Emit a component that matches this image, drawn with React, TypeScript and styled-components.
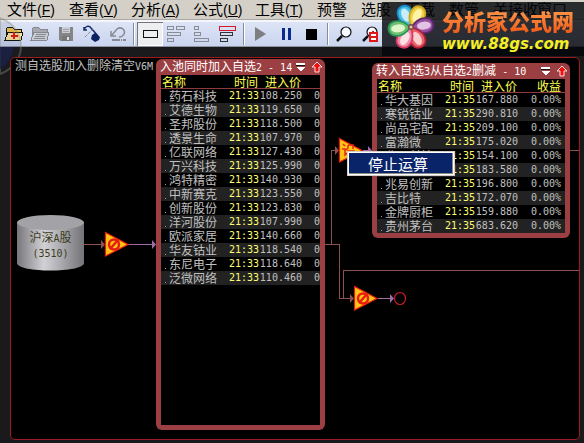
import React from "react";
import styled, { createGlobalStyle } from "styled-components";

const cjk = '"Noto Sans CJK SC", sans-serif';
const mono = '"DejaVu Sans Mono", "Noto Sans CJK SC", monospace';

const GlobalStyle = createGlobalStyle`
  * { box-sizing: border-box; }
  body { margin: 0; background: #1a1a1c; font-family: ${cjk}; overflow: hidden; }
  button { font-family: inherit; padding: 0; border: 0; background: none; }
`;

const Shell = styled.div`
  min-height: 100vh;
  display: flex;
  flex-direction: column;
  position: relative;
`;

const MenuBar = styled.nav`
  height: 20px;
  display: flex;
  align-items: flex-start;
  gap: 14px;
  padding-left: 7px;
  background: #d4d0c8;
  border-bottom: 1px solid #a9a8a6;
`;

const MenuItem = styled.button<{ $wide?: boolean }>`
  flex: none;
  width: ${(p) => (p.$wide ? 48 : 30)}px;
  white-space: nowrap;
  text-align: left;
  font-size: 15px;
  line-height: 17px;
  color: #000;
`;

const Accel = styled.span`
  font-family: "Liberation Sans", sans-serif;
  font-size: 14px;
`;

const ToolBar = styled.div`
  height: 27px;
  display: flex;
  align-items: center;
  padding-left: 1px;
  border-top: 2px solid #f4f6fb;
  border-bottom: 1px solid #8e949f;
  background: linear-gradient(#dde4f6, #c9d4ee);
`;

const Tool = styled.button<{ $pressed?: boolean }>`
  width: 26px;
  height: 24px;
  display: grid;
  place-items: center;
  background: ${(p) => (p.$pressed ? "#eceef0" : "transparent")};
  box-shadow: ${(p) => (p.$pressed ? "inset 1px 1px #777, inset -1px -1px #fff" : "none")};
`;

const Divider = styled.span`
  width: 2px;
  height: 22px;
  margin: 0 2px;
  background: #858b97;
  border-right: 1px solid #fff;
`;

const Watermark = styled.aside`
  position: absolute;
  top: 2px;
  right: 0;
  width: 202px;
  height: 54px;
  padding-left: 4px;
  display: flex;
  gap: 4px;
  background: rgba(5, 6, 10, 0.82);
`;

const Brand = styled.div`
  display: flex;
  flex-direction: column;
  padding-top: 4px;
  white-space: nowrap;
`;

const BrandName = styled.span`
  font-size: 22px;
  line-height: 28px;
  font-weight: 900;
  color: transparent;
  background: linear-gradient(#ffa052, #f05a16);
  background-clip: text;
`;

const BrandLink = styled.a`
  font: italic bold 15px/20px "DejaVu Sans", sans-serif;
  color: #f5ef25;
  text-decoration: none;
`;

const Lens = styled.svg`
  position: absolute;
  left: 0;
  top: 14px;
  pointer-events: none;
`;

const Canvas = styled.main`
  flex: 1;
  position: relative;
  min-height: 383px;
  margin: 10px 4px 3px 10px;
  background: #000;
  border: 1px solid #9c1c20;
  border-radius: 5px;
`;

const CanvasTitle = styled.h1`
  margin: 0;
  padding-left: 4px;
  font-size: 12px;
  line-height: 14px;
  font-weight: 400;
  color: #c0c0c0;
`;

const Latin = styled.span`
  font-family: ${mono};
  font-size: 10px;
  white-space: pre;
`;

const Wires = styled.svg`
  position: absolute;
  inset: 0;
  width: 100%;
  height: 100%;
  overflow: visible;
`;

const Source = styled.div`
  position: absolute;
  left: 6px;
  top: 157px;
  width: 67px;
  height: 56px;
  display: grid;
`;

const SourceShape = styled.svg`
  grid-area: 1 / 1;
`;

const SourceLabel = styled.div`
  grid-area: 1 / 1;
  z-index: 1;
  padding-top: 15px;
  text-align: center;
  font-size: 12px;
  line-height: 13px;
  color: #3c3c20;
`;

const Pool = styled.section<{ $x: number; $y: number; $w: number; $h: number }>`
  position: absolute;
  left: ${(p) => p.$x}px;
  top: ${(p) => p.$y}px;
  width: ${(p) => p.$w}px;
  min-height: ${(p) => p.$h}px;
  display: flex;
  flex-direction: column;
  padding: 0 5px 5px;
  border-radius: 6px;
  background: #9b3f42;
`;

const PoolHead = styled.header`
  display: flex;
  align-items: center;
  height: 16px;
  margin: 0 -5px 0 -1px;
  color: #fff;
`;

const PoolTitle = styled.h2`
  flex: 1;
  margin: 0;
  font-size: 12px;
  line-height: 16px;
  font-weight: 400;
  white-space: nowrap;
`;

const HeadButton = styled.button`
  width: 16px;
  height: 14px;
  display: grid;
  place-items: center;
`;

const PoolBody = styled.div`
  flex: 1;
  background: #000;
`;

const Table = styled.table`
  width: 100%;
  table-layout: fixed;
  border-collapse: collapse;
  font-size: 12px;
  line-height: 14px;
  color: #c0c0c0;
  white-space: nowrap;
`;

const HeadRow = styled.tr`
  height: 14px;
  color: #ffff50;
  box-shadow: inset 0 -1px #8c3a3c;
`;

const Row = styled.tr`
  height: 14px;
  &:nth-child(even) { background: #222; }
`;

const Th = styled.th<{ $w?: number }>`
  width: ${(p) => (p.$w ? `${p.$w}px` : "auto")};
  height: 14px;
  padding: 0 1px;
  font-weight: 400;
  line-height: 14px;
  text-align: right;
  &:first-child { text-align: left; }
  &:last-child { padding-right: 4px; }
`;

const NameCell = styled.td`
  height: 14px;
  padding: 0 0 0 8px;
  line-height: 14px;
  background: linear-gradient(#a0a0a0, #a0a0a0) 4px 11px / 1px 1px no-repeat;
`;

const NumCell = styled.td<{ $time?: boolean; $edge?: number }>`
  height: 14px;
  padding: 0 ${(p) => p.$edge ?? 0}px 0 0;
  text-align: right;
  font-family: ${mono};
  font-size: 10px;
  line-height: 14px;
  color: ${(p) => (p.$time ? "#ffff70" : "inherit")};
`;

const Popup = styled.div`
  position: absolute;
  left: 336px;
  top: 93px;
  width: 108px;
  padding: 2px;
  background: #0a246a;
  border: 1px solid #d4d0c8;
  box-shadow: inset 0 0 0 1px #fff, inset -1px -1px 0 1px #8a8a8a;
`;

const PopupItem = styled.button`
  display: block;
  width: 100%;
  padding-left: 18px;
  text-align: left;
  font-size: 15px;
  line-height: 19px;
  color: #fff;
`;

const menus: [string, string?][] = [
  ["文件", "F"], ["查看", "V"], ["分析", "A"], ["公式", "U"], ["工具", "T"],
  ["预警"], ["选股"], ["下载"], ["数管"], ["关接收"], ["窗口"],
];

type Stock = [string, string];

const entryStocks: Stock[] = [
  ["药石科技", "108.250"], ["艾德生物", "119.650"], ["圣邦股份", "118.500"],
  ["透景生命", "107.970"], ["亿联网络", "127.430"], ["万兴科技", "125.990"],
  ["鸿特精密", "140.930"], ["中新赛克", "123.550"], ["创新股份", "123.830"],
  ["洋河股份", "107.990"], ["欧派家居", "140.660"], ["华友钴业", "118.540"],
  ["东尼电子", "118.640"], ["泛微网络", "110.460"],
];

const movedStocks: Stock[] = [
  ["华大基因", "167.880"], ["寒锐钴业", "290.810"], ["尚品宅配", "209.100"],
  ["富瀚微", "175.020"], ["兆日科技", "154.100"], ["先导智能", "183.580"],
  ["兆易创新", "196.800"], ["吉比特", "172.070"], ["金牌厨柜", "159.880"],
  ["贵州茅台", "683.620"],
];

function Folder({ on }: { on?: boolean }) {
  const s = on ? "#15130a" : "#85888e";
  return (
    <svg width="20" height="18" viewBox="0 0 20 18" shapeRendering="crispEdges">
      <path d="M2 15V4L4 2H8L10 4H17V7" fill={on ? "#f3c84d" : "#a5a8ae"} stroke={s} />
      <path d="M1 15L4 7H19L17 15Z" fill={on ? "#ffe69b" : "#c8ccd2"} stroke={s} />
      {on ? (
        <path d="M10 7V14M6.5 10.5H13.500" stroke="#e02010" strokeWidth="2" />
      ) : (
        <path d="M6 9H16M5 11H15M4 13H15" stroke="#85888e" />
      )}
    </svg>
  );
}

function Save() {
  return (
    <svg width="16" height="16" viewBox="0 0 16 16" shapeRendering="crispEdges">
      <path d="M1 1H15V15H2L1 14Z" fill="#858585" />
      <path d="M4 1H12V7H4Z" fill="#c9ced8" />
      <path d="M5 3H11M5 5H11" stroke="#a0a4aa" />
      <path d="M4 10H12V15H4Z" fill="#777" />
      <path d="M9 11H11V14H9Z" fill="#e1e6ee" />
    </svg>
  );
}

function Probe() {
  return (
    <svg width="18" height="18" viewBox="0 0 18 18">
      <path d="M1 5C2 1 6 0 8 3L15 11M1 2V5H4" fill="none" stroke="#142a68" strokeWidth="1.500" />
      <path d="M9 10L12 8L17 12L16 15L12 17L8 14Z" fill="#0c2262" />
      <path d="M2 12L10 4" stroke="#54627f" strokeDasharray="1 1" />
    </svg>
  );
}

function Undo() {
  return (
    <svg width="18" height="16" viewBox="0 0 18 16">
      <path d="M3 9L8 3C12 0 17 4 15 8C14 10 12 11 10 11M2 5V10H7" fill="none" stroke="#888b91" strokeWidth="1.500" />
      <path d="M3 14H17" stroke="#888b91" strokeWidth="2" strokeDasharray="8 1 1 1" />
    </svg>
  );
}

function Bars({ kind }: { kind: "box" | "left" | "corner" | "top" }) {
  return (
    <svg width="20" height="20" viewBox="0 0 20 20" fill="none" shapeRendering="crispEdges">
      {kind === "box" && <path d="M3 6.500H17V13.500H3Z" stroke="#111" />}
      {kind === "left" && (
        <path d="M1.500 2.500H7.500V5.500H1.500ZM10.500 2.500H18.500V5.500H10.500ZM1.500 8.500H14.500V11.500H1.500ZM1.500 14.500H7.500V17.500H1.500Z" stroke="#888d95" />
      )}
      {kind === "corner" && (
        <path d="M2.500 2.500H6.500V5.500H2.500ZM2.500 8.500H8.500V11.500H2.500ZM2.500 14.500H16.500V17.500H2.500Z" stroke="#888d95" />
      )}
      {kind === "top" && (
        <>
          <path d="M1.500 2.500H17.500V6.500H1.500Z" stroke="#d61828" />
          <path d="M2.500 8.500H14.500V11.500H2.500ZM2.500 14.500H9.500V17.500H2.500Z" stroke="#333" />
        </>
      )}
    </svg>
  );
}

function Transport({ kind }: { kind: "play" | "pause" | "stop" }) {
  return (
    <svg width="14" height="16" viewBox="0 0 14 16">
      {kind === "play" && <path d="M2 1V15L13 8Z" fill="#7e7e80" />}
      {kind === "pause" && <path d="M3 2H6V14H3ZM9 2H12V14H9Z" fill="#0a2b8c" />}
      {kind === "stop" && <path d="M1 3H12V14H1Z" fill="#000" />}
    </svg>
  );
}

function Magnifier({ red }: { red?: boolean }) {
  return (
    <svg width="18" height="18" viewBox="0 0 18 18">
      <path d="M7 11L2 16" stroke="#111" strokeWidth="2.500" />
      <circle cx="11" cy="7" r="5" fill="#f7fbff" stroke="#111" strokeWidth="1.200" />
      {red && <path d="M9 8H16V16H9ZM12 6V8M9 12H16" stroke="#e01818" strokeWidth="2" fill="#fff" />}
    </svg>
  );
}

const petals: [number, string, string, string][] = [
  [-24, "#158cc8", "#4dbde6", "#c8eff9"],
  [28, "#c9a51c", "#efcf45", "#fff4a6"],
  [84, "#5d276e", "#94509f", "#e3c3e4"],
  [152, "#b92038", "#e8656c", "#f9cfcf"],
  [208, "#d83763", "#f28ba5", "#fde1e4"],
  [264, "#279456", "#6cc072", "#dff5ca"],
];

function Flower() {
  return (
    <svg width="52" height="54" viewBox="0 0 52 54">
      {petals.map(([angle, edge, fill, light]) => (
        <g key={angle} transform={`translate(25 25) rotate(${angle})`}>
          <path d="M0 0C-7 -5 -9 -11 -8 -16C-7 -26 7 -26 8 -16C9 -11 7 -5 0 0Z" fill={edge} />
          <path d="M0 -2C-5 -6 -8 -12 -6 -17C-5 -23 5 -23 6 -17C8 -12 5 -6 0 -2Z" fill={fill} />
          <ellipse cx="0" cy="-13" rx="4" ry="7" fill={light} />
        </g>
      ))}
      <circle cx="25" cy="25" r="3" fill="#7c4a42" />
      <circle cx="25" cy="25" r="1.500" fill="#d8c5b8" />
    </svg>
  );
}

function Gate({ x, y, plain }: { x: number; y: number; plain?: boolean }) {
  return (
    <g transform={`translate(${x} ${y})`}>
      <path d="M0.500 -11.500L23 0.500L0.500 12Z" fill="#ffc414" stroke="#e91c10" strokeWidth="1.200" />
      {plain ? (
        <path d="M4 -6L6 -4M3 -1H6V5L8 3M9 -5H14V-1M9 -5V-2L7 0M8 1H14L8 6M9 2L15 6" fill="none" stroke="#e22a10" strokeWidth="1.500" />
      ) : (
        <>
          <circle cx="9" cy="0.500" r="5" fill="none" stroke="#e61d12" strokeWidth="2.500" />
          <path d="M5 5L13 -4" stroke="#e61d12" strokeWidth="2.500" />
        </>
      )}
    </g>
  );
}

function Flow() {
  const wire = "#8c5150";
  const out = "#a06ba6";
  return (
    <Wires fill="none" aria-hidden="true">
      <g stroke={wire} shapeRendering="crispEdges">
        <path d="M73 186.500H91M314 186.500H328.500V240.500H340M320.500 186V92.500H325M332.500 240V212.500" />
        <line x1="332" y1="212.500" x2="100%" y2="212.500" />
        <line x1="558" y1="92.500" x2="100%" y2="92.500" />
      </g>
      <path d="M90 182L94 186.500L90 191ZM339 236L343 240.500L339 245ZM324 88L328 92.500L324 97Z" fill={wire} />
      <g stroke={out} shapeRendering="crispEdges">
        <path d="M117 186.500H142M367 240.500H380M352 92.500H357" />
      </g>
      <path d="M141 182L145 186.500L141 191ZM379 236L383 240.500L379 245ZM357 88L361 92.500L357 97Z" fill={out} />
      <Gate x={94} y={186} />
      <Gate x={343} y={240} />
      <Gate x={328} y={92} plain />
      <ellipse cx="389" cy="240.500" rx="5.500" ry="6" stroke="#c81c24" strokeWidth="1.200" />
    </Wires>
  );
}

interface PoolProps {
  title: string;
  digit: React.ReactNode;
  count: string;
  stocks: Stock[];
  time: string;
  gain: string;
  gainTitle: string;
  edge: number;
  box: [number, number, number, number];
}

function StockPool({ digit, title, count, stocks, time, gain, gainTitle, edge, box }: PoolProps) {
  const [x, y, w, h] = box;
  return (
    <Pool $x={x} $y={y} $w={w} $h={h} aria-label={title}>
      <PoolHead>
        <PoolTitle>{digit}<Latin> - {count}</Latin></PoolTitle>
        <HeadButton aria-label="菜单">
          <svg width="10" height="10" viewBox="0 0 10 10" shapeRendering="crispEdges">
            <path d="M0 1H9V3H0Z" fill="#fff" />
            <path d="M0 3H9V4H0Z" fill="#111" />
            <path d="M0 5H9L5 9H4Z" fill="#fff" />
          </svg>
        </HeadButton>
        <HeadButton aria-label="上移">
          <svg width="12" height="12" viewBox="0 0 12 12">
            <path d="M6 1L11 6H8V11H4V6H1Z" fill="#f01010" stroke="#ffdada" strokeWidth="1" />
          </svg>
        </HeadButton>
      </PoolHead>
      <PoolBody>
        <Table>
          <thead>
            <HeadRow>
              <Th $w={68}>名称</Th>
              <Th $w={30}>时间</Th>
              <Th $w={43}>进入价</Th>
              <Th aria-label="收益">{gainTitle}</Th>
            </HeadRow>
          </thead>
          <tbody>
            {stocks.map(([name, price]) => (
              <Row key={name}>
                <NameCell>{name}</NameCell>
                <NumCell $time>{time}</NumCell>
                <NumCell>{price}</NumCell>
                <NumCell $edge={edge}>{gain}</NumCell>
              </Row>
            ))}
          </tbody>
        </Table>
      </PoolBody>
    </Pool>
  );
}

export default function App() {
  return (
    <Shell>
      <GlobalStyle />
      <MenuBar>
        {menus.map(([label, key]) => (
          <MenuItem key={label} $wide={Boolean(key)}>
            {label}{key && <Accel>(<u>{key}</u>)</Accel>}
          </MenuItem>
        ))}
      </MenuBar>
      <ToolBar role="toolbar">
        <Tool aria-label="新建"><Folder on /></Tool>
        <Tool aria-label="打开"><Folder /></Tool>
        <Tool aria-label="保存"><Save /></Tool>
        <Tool aria-label="连接"><Probe /></Tool>
        <Tool aria-label="撤销"><Undo /></Tool>
        <Divider />
        <Tool aria-label="选择" $pressed><Bars kind="box" /></Tool>
        <Tool aria-label="左对齐"><Bars kind="left" /></Tool>
        <Tool aria-label="下对齐"><Bars kind="corner" /></Tool>
        <Tool aria-label="上对齐"><Bars kind="top" /></Tool>
        <Divider />
        <Tool aria-label="运行"><Transport kind="play" /></Tool>
        <Tool aria-label="暂停"><Transport kind="pause" /></Tool>
        <Tool aria-label="停止"><Transport kind="stop" /></Tool>
        <Divider />
        <Tool aria-label="查找"><Magnifier /></Tool>
        <Tool aria-label="查找自选"><Magnifier red /></Tool>
      </ToolBar>
      <Lens width="22" height="64" viewBox="0 0 22 64">
        <path d="M0 4C28 14 28 50 0 60Z" fill="#20264c" fillOpacity="0.100" stroke="#8b8b78" strokeOpacity="0.400" strokeWidth="2" />
        <path d="M0 33H14C12 43 8 50 0 55Z" fill="#1b2048" fillOpacity="0.800" />
      </Lens>
      <Canvas>
        <CanvasTitle>测自选股加入删除清空<Latin>V6M</Latin></CanvasTitle>
        <Flow />
        <Source>
          <SourceShape width="67" height="56" viewBox="0 0 67 56">
            <defs>
              <linearGradient id="drum">
                <stop offset="0" stopColor="#77777b" />
                <stop offset="0.400" stopColor="#d2d2d6" />
                <stop offset="0.600" stopColor="#b4b4b8" />
                <stop offset="1" stopColor="#747478" />
              </linearGradient>
            </defs>
            <path d="M0 7V48C0 58 67 58 67 48V7Z" fill="url(#drum)" />
            <ellipse cx="33.500" cy="7.500" rx="33.500" ry="7.500" fill="#a3a3a7" />
          </SourceShape>
          <SourceLabel>沪深<Latin>A</Latin>股<br /><Latin>(3510)</Latin></SourceLabel>
        </Source>
        <StockPool
          title="入池同时加入自选2"
          digit={<>入池同时加入自选<Latin>2</Latin></>}
          count="14"
          stocks={entryStocks}
          time="21:33"
          gain="0"
          gainTitle=""
          edge={0}
          box={[145, 1, 169, 371]}
        />
        <StockPool
          title="转入自选3从自选2删减"
          digit={<>转入自选<Latin>3</Latin>从自选<Latin>2</Latin>删减</>}
          count="10"
          stocks={movedStocks}
          time="21:35"
          gain="0.00%"
          gainTitle="收益"
          edge={4}
          box={[361, 5, 198, 175]}
        />
        <Popup role="menu">
          <PopupItem role="menuitem">停止运算</PopupItem>
        </Popup>
      </Canvas>
      <Watermark>
        <Flower />
        <Brand>
          <BrandName>分析家公式网</BrandName>
          <BrandLink href="#">www.88gs.com</BrandLink>
        </Brand>
      </Watermark>
    </Shell>
  );
}
